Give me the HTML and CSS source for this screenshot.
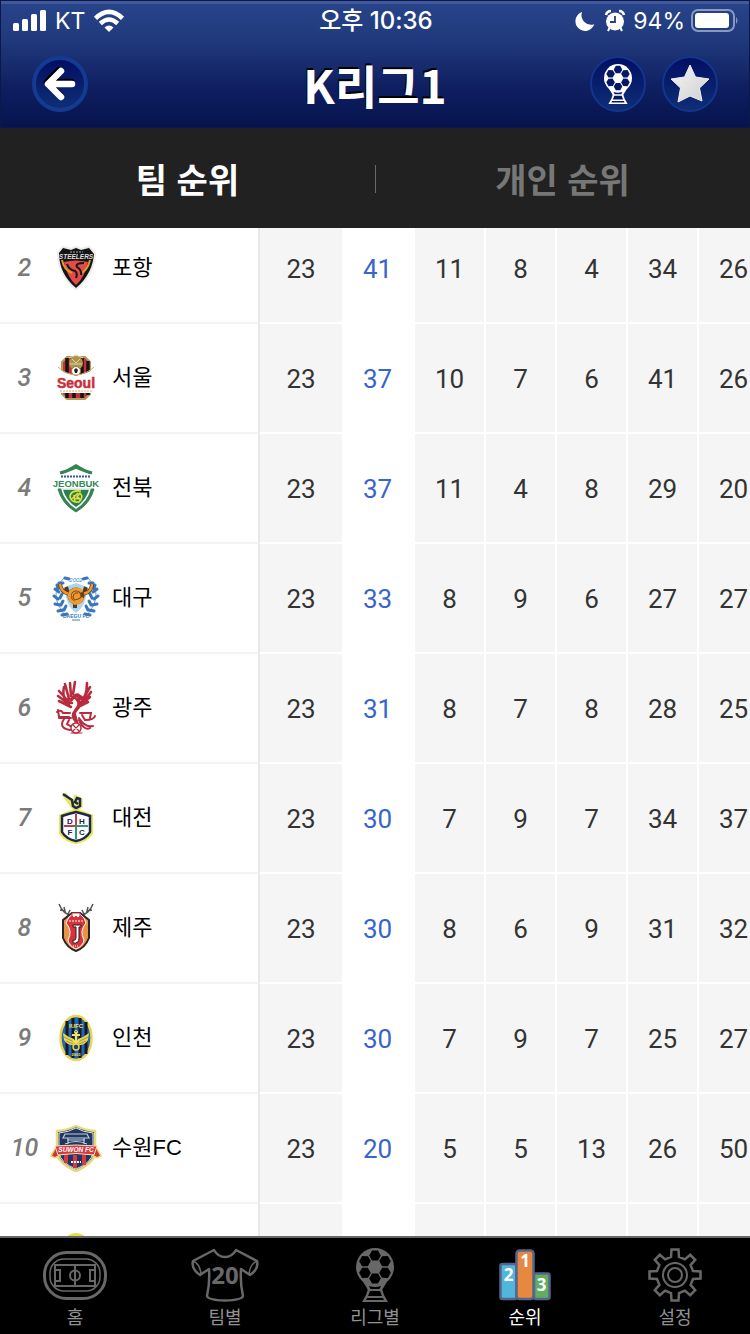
FILE: index.html
```html
<!DOCTYPE html>
<html lang="ko">
<head>
<meta charset="utf-8">
<meta name="viewport" content="width=device-width, initial-scale=1">
<title>K리그1 팀 순위</title>
<link rel="stylesheet" href="styles.css">
</head>
<body>
<svg class="defs" aria-hidden="true">
  <defs>
    <symbol id="ball-trophy" viewBox="0 0 38 54">
      <path d="M1 24 12 42H26L37 24Z" fill="currentColor"/>
      <path class="hole" d="M13 38 15 42H23L25 38Q19 40 13 38Z"/>
      <path d="M12 41H26L28 47 32 54H6L10 47Z" fill="currentColor"/>
      <path class="hole" d="M14 43H24L26 48H12Z M11 50H27L28 52H10Z"/>
      <circle cx="19" cy="19" r="19" fill="currentColor"/>
      <g class="hole">
        <path id="hex" d="M13.2 7.5 16 2.4H22L24.8 7.5 22 12.4H16Z"/>
        <use href="#hex" transform="rotate(60 19 19)"/>
        <use href="#hex" transform="rotate(120 19 19)"/>
        <use href="#hex" transform="rotate(180 19 19)"/>
        <use href="#hex" transform="rotate(240 19 19)"/>
        <use href="#hex" transform="rotate(300 19 19)"/>
      </g>
    </symbol>
    <linearGradient id="star-fill" x1="0" y1="0" x2="1" y2="1">
      <stop offset="0" stop-color="#f6f6f6"/><stop offset="1" stop-color="#cfcfcf"/>
    </linearGradient>
  </defs>
</svg>
<div class="app">
  <header class="header">
    <div class="status">
      <div class="status-left">
        <svg width="33" height="22" viewBox="0 0 33 22" fill="#fff"><rect y="13" width="6" height="8" rx="1.5"/><rect x="9" y="9" width="6" height="12" rx="1.5"/><rect x="18" y="4" width="6" height="17" rx="1.5"/><rect x="27" width="6" height="21" rx="1.5"/></svg>
        <span>KT</span>
        <svg width="30" height="22" viewBox="0 0 30 22" fill="none" stroke="#fff" stroke-width="4.5"><path d="M1.500 8.300Q15-4.500 28.500 8.300"/><path d="M6.300 13.500Q15 5.500 23.700 13.500"/><path d="M15 22 10.500 17.500Q15 13.500 19.500 17.500Z" fill="#fff" stroke="none"/></svg>
      </div>
      <time class="clock">오후 10:36</time>
      <div class="status-right">
        <svg width="20" height="20" viewBox="0 0 20 20"><path d="M7 1A9.700 9.700 0 1 0 19.300 13.200 9.700 9.700 0 0 1 7 1Z" fill="#fff"/></svg>
        <svg class="alarm" width="20" height="22" viewBox="0 0 20 22"><path d="M3 21 5 17M17 21 15 17" stroke="#fff" stroke-width="2"/><circle cx="10" cy="11.500" r="9" fill="#fff"/><path d="M1 5Q2 1 6 1M19 5Q18 1 14 1" fill="none" stroke="#fff" stroke-width="2.500"/><path d="M10 6V12H5" fill="none" stroke="#263f83" stroke-width="1.800"/></svg>
        <span>94%</span>
        <svg width="48" height="24" viewBox="0 0 48 24"><rect x="1" y="1" width="42" height="21" rx="6" fill="none" stroke="#8b99c0" stroke-width="2"/><rect x="4" y="4" width="34" height="15" rx="3" fill="#fff"/><path d="M45 8Q48 11.500 45 15Z" fill="#8b99c0"/></svg>
      </div>
    </div>
    <div class="nav">
      <button class="round back" aria-label="뒤로"><svg width="34" height="34" viewBox="0 0 34 34" fill="none" stroke-width="6.5" stroke-linecap="round" stroke-linejoin="round"><path d="M17 2 4 15 17 28M5 15H28" stroke="#000"/><path d="M18 4 5 17 18 30M6 17H29" stroke="#fff"/></svg></button>
      <h1 class="title">K리그1</h1>
      <div class="actions">
        <button class="round" aria-label="리그"><svg width="28" height="40"><use href="#ball-trophy"/></svg></button>
        <button class="round" aria-label="즐겨찾기"><svg width="40" height="40" viewBox="0 0 40 40"><path d="M20 1 25.500 13 39 15 29.500 24 32 37 20 32 8 38 10.500 24 1 15 14.500 13Z" fill="url(#star-fill)" stroke="#eee" stroke-linejoin="round"/></svg></button>
      </div>
    </div>
  </header>

  <div class="tabs" role="tablist">
    <button class="tab is-active" role="tab" aria-selected="true">팀 순위</button>
    <button class="tab" role="tab" aria-selected="false">개인 순위</button>
  </div>

  <main class="standings">
    <table class="table">
      <colgroup><col class="col-team"><col class="col-played"><col class="col-points"><col class="col-stat"><col class="col-stat"><col class="col-stat"><col class="col-stat"><col class="col-stat"></colgroup>
      <tbody>
        <tr><th scope="row"><div class="team"><span class="rank">2</span>
          <svg class="badge" viewBox="-27 -28 54 56"><path d="M-17-15-13-20-5-18 0-20 5-18 13-20 18-14C17-2 12 10 0 20-12 10-17-2-17-15Z" fill="#111" stroke="#ececec" stroke-width="4"/><path d="M-17-15-13-20-5-18 0-20 5-18 13-20 18-14C17-2 12 10 0 20-12 10-17-2-17-15Z" fill="#151515"/><path d="M-12-6Q0-9 12-6 9 9 0 17-9 9-12-6Z" fill="#e24b47"/><path d="M-14-8Q-12 2-4 5M14-8Q12 1 6 5" stroke="#d99a2b" stroke-width="2" fill="none"/><path d="M-9-4Q-7 2-1 3 2 5 0 10M8-5Q-1-5 1-1 6 2 5 7" stroke="#171717" stroke-width="2" fill="none"/><text y="-9" font-size="6.500" font-weight="700" fill="#ddd" text-anchor="middle" font-style="italic">STEELERS</text><path d="M-6-16H7" stroke="#aaa" stroke-dasharray="2 1"/></svg><span class="name">포항</span></div></th><td>23</td><td class="pts">41</td><td>11</td><td>8</td><td>4</td><td>34</td><td>26</td></tr>
        <tr><th scope="row"><div class="team"><span class="rank">3</span>
          <svg class="badge" viewBox="-27 -28 54 56"><path d="M-9-21H9L14-16V16L9 21H-9L-14 16V-16Z" fill="#c5303a" stroke="#b39a5b" stroke-width="2"/><path d="M-9-20V20M-2-20V20M6-20V20M12-17V17" stroke="#171313" stroke-width="3.500"/><path d="M-18-10Q-12-4 0-3 12-4 18-10L20 15H-20Z" fill="#fff"/><circle cy="-15" r="7" fill="#ad9350"/><path d="M-7-20 0-23 7-20M-6-14H6M-4-19 0-15 4-19" stroke="#e5d39b" fill="none"/><circle cy="-7" r="4.500" fill="#fff" stroke="#8d7a42"/><path d="M-2-8 0-10 2-8 1-5H-1Z" fill="#222"/><path d="M-18-11Q-11-4 0-3 11-4 18-11" stroke="#c8b273" fill="none"/><text y="10" font-size="14" font-weight="700" fill="#c82f3c" stroke="#c82f3c" stroke-width=".5" text-anchor="middle">Seoul</text><path d="M-16 13H17" stroke="#c8b273" stroke-dasharray="2 1"/></svg><span class="name">서울</span></div></th><td>23</td><td class="pts">37</td><td>10</td><td>7</td><td>6</td><td>41</td><td>26</td></tr>
        <tr><th scope="row"><div class="team"><span class="rank">4</span>
          <svg class="badge" viewBox="-27 -28 54 56"><path d="M-16-15-7-20 0-24 7-20 16-15 14-14Q7-17 0-20-7-17-14-14Z" fill="#368453"/><path d="M-16-15Q-5-18 0-21 5-18 16-15" fill="none" stroke="#368453" stroke-width="3"/><path d="M-18 1H18Q14 16 0 24-14 16-18 1Z" fill="#368453" stroke="#368453"/><path d="M-14 1H14Q11 13 0 20-11 13-14 1Z" fill="#29814f" stroke="#fff" stroke-width="1.500"/><path d="M-15-11.500H15" stroke="#315895" stroke-width="2" stroke-dasharray="2 1"/><text y="-1" font-size="9.500" font-weight="700" fill="#348858" stroke="#fff" stroke-width="2" paint-order="stroke" text-anchor="middle">JEONBUK</text><path d="M5 3Q-6 2-6 9-4 15 3 14 8 9 4 5L1 9 4 11-3 10 2 5M-2 7-1 14" stroke="#e5df3f" stroke-width="1.600" fill="none"/></svg><span class="name">전북</span></div></th><td>23</td><td class="pts">37</td><td>11</td><td>4</td><td>8</td><td>29</td><td>20</td></tr>
        <tr><th scope="row"><div class="team"><span class="rank">5</span>
          <svg class="badge" viewBox="-27 -28 54 56"><path d="M-11-11 0-15 11-11Q11 7 0 15-11 7-11-11Z" fill="#a9d7f3"/><g fill="none" stroke="#3976bd"><path d="M-12-20Q-29-3-10 18M12-20Q29-3 10 18" stroke-width=".7"/><path d="M-11-20-7-19M11-20 7-19M-17-15-13-15M17-15 13-15M-21-9-17-6M21-9 17-6M-22-2-18 1M22-2 18 1M-21 6-16 7M21 6 16 7M-18 13-13 12M18 13 13 12M-14 17-9 16M14 17 9 16M-18-9-19-13M18-9 19-13M-16 0-14-4M16 0 14-4M-15 7-13 3M15 7 13 3M-12 12-10 8M12 12 10 8" stroke-width="3" stroke-linecap="round"/></g><path d="M-16-14Q-15-6-7-4M16-14Q16-6 7-4M-10-11-8-5M10-11 8-5M-1 4V10" fill="none" stroke="#5b3920" stroke-width="4"/><path d="M-16-14Q-15-6-7-4M16-14Q16-6 7-4M-1 4V7" fill="none" stroke="#ed982c" stroke-width="2.500"/><circle cy="-2" r="6.500" fill="#ed982c" stroke="#694020" stroke-width="4"/><path d="M6-6A7 7 0 1 0 7 0Q2 5-1 1-4-5 2-5" fill="none" stroke="#f09b30" stroke-width="3"/><path d="M4 0Q-2 4-3-1-2-6 2-5" fill="none" stroke="#694020"/><text y="-16" font-size="6" font-style="italic" fill="#488ac4" text-anchor="middle">2002</text><text y="20" font-size="5" font-weight="700" fill="#2f79b9" text-anchor="middle">DAEGU FC</text><path d="M-4 22H4" stroke="#3c80bd"/></svg><span class="name">대구</span></div></th><td>23</td><td class="pts">33</td><td>8</td><td>9</td><td>6</td><td>27</td><td>27</td></tr>
        <tr><th scope="row"><div class="team"><span class="rank">6</span>
          <svg class="badge" viewBox="-27 -28 54 56"><g fill="none" stroke="#b92b3e" stroke-linecap="round"><path d="M-4-5Q-15-7-12-21M-7-9-11-24M-5-12-6-25M-3-14-1-26M-7-6-17-17M-7-4-18-12M-5-1-17-7" stroke-width="2.600"/><path d="M3-4Q11-10 11-25M7-9 14-21M8-7 15-16M6-4 14-11M4-2 12-6" stroke-width="2.600"/><path d="M-5-8Q0-15 3-12L6-10 1-9Q6-4 0 2-5 8 0 13" stroke-width="3.500"/><path d="M-18 2-17 9H-7M-19 4Q-15 1-13 5H-6M-17 10H-5M-12 11Q-18 20-6 22M-7 12-9 16-4 19M4 5H15L14 10M6 7 9 12Q18 12 19 8M3 10Q9 20 17 18M3 12Q8 23 14 20M-1 6 2 17" stroke-width="2"/><circle cy="20" r="5" fill="#fff" stroke-width="1.500" stroke-dasharray="3 1"/><path d="M-3 17 3 23M3 17-3 23M-5 25H6" stroke-width="1.200"/></g></svg><span class="name">광주</span></div></th><td>23</td><td class="pts">31</td><td>8</td><td>7</td><td>8</td><td>28</td><td>25</td></tr>
        <tr><th scope="row"><div class="team"><span class="rank">7</span>
          <svg class="badge" viewBox="-27 -28 54 56"><path d="M-12-24-3-12 0-9 4-12V-18L0-20-1-13M0-9V-6" fill="none" stroke="#e9e755" stroke-width="5"/><path d="M-13-24-4-18-3-12 0-10 4-12V-19L1-20-1-16 2-14" fill="none" stroke="#1b2850" stroke-width="2.500"/><path d="M0-9V-5" stroke="#1b2850" stroke-width="3"/><path d="M0-7Q8-5 15-2V15Q10 22 0 24-10 22-15 15V-2Q-8-5 0-7Z" fill="#fff" stroke="#ece952" stroke-width="4"/><path d="M0-6Q8-4 14-2V14Q10 21 0 23-10 21-14 14V-2Q-8-4 0-6Z" fill="#fff" stroke="#1b2850" stroke-width="2.500"/><path d="M0-4V8H-12" fill="none" stroke="#bd3d52" stroke-width="2"/><path d="M12 8H0V21" fill="none" stroke="#319474" stroke-width="2"/><g fill="#1b2850" font-size="8" font-weight="700" text-anchor="middle"><text x="-6" y="6">D</text><text x="6" y="6">H</text><text x="-6" y="17">F</text><text x="6" y="17">C</text></g></svg><span class="name">대전</span></div></th><td>23</td><td class="pts">30</td><td>7</td><td>9</td><td>7</td><td>34</td><td>37</td></tr>
        <tr><th scope="row"><div class="team"><span class="rank">8</span>
          <svg class="badge" viewBox="-27 -28 54 56"><g fill="none" stroke="#555" stroke-width="1.500"><path d="M-4-12Q-13-14-17-24M-16-18-11-17-12-21M-8-14-6-18M4-12Q13-14 17-24M16-18 11-17 12-21M8-14 6-18"/></g><path d="M-8-12-4-15H4L8-12 13-8V10Q9 20 0 23-9 20-13 10V-8Z" fill="#e99345" stroke="#272329" stroke-width="2"/><path d="M-7-11-3-14H4L8-10 10-5Q3 3 8 12 7 18 0 21-7 18-8 12-3 3-10-5Z" fill="#d9323c" stroke="#fff"/><path d="M-4-12V-15H4V-12L2-10 0-12-2-10Z" fill="#fff" stroke="#d9323c"/><path d="M-7-7H8" stroke="#fff" stroke-dasharray="2 1"/><path d="M-3-3H5V-1H3V10Q3 16-3 15V12Q0 13 0 9V-1H-3Z" fill="#fff" stroke="#271a1d"/><path d="M-3 18H3" stroke="#fff" stroke-dasharray="1 1"/></svg><span class="name">제주</span></div></th><td>23</td><td class="pts">30</td><td>8</td><td>6</td><td>9</td><td>31</td><td>32</td></tr>
        <tr><th scope="row"><div class="team"><span class="rank">9</span>
          <svg class="badge" viewBox="-27 -28 54 56"><ellipse rx="15.500" ry="22" fill="#2465b6" stroke="#ead54d" stroke-width="2.500"/><path d="M-9-17V17M-3-20V20M4-20V20M10-16V16" stroke="#16191f" stroke-width="3"/><path d="M-13-5Q-8-1-2 1L-1 7Q-9 8-12 2L-13-5ZM13-5Q8-1 2 1L1 7Q9 8 12 2Z" fill="#e9d550"/><path d="M-12-1-2 4M-10 3-3 6M12-1 2 4M10 3 3 6" stroke="#8f8a3d" stroke-width=".8"/><path d="M0-6V4M-4-3H4M-3 2 0 5 3 2" stroke="#f5e35c" stroke-width="2" fill="none"/><circle cy="9" r="3" fill="#194779" stroke="#e9d550" stroke-width="1.500"/><circle cy="-6" r="1.500" fill="none" stroke="#f5e35c"/><g fill="#f5e35c" text-anchor="middle" font-weight="700"><text y="-10" font-size="6">IUFC</text><text y="18" font-size="4">2003</text></g></svg><span class="name">인천</span></div></th><td>23</td><td class="pts">30</td><td>7</td><td>9</td><td>7</td><td>25</td><td>27</td></tr>
        <tr><th scope="row"><div class="team"><span class="rank">10</span>
          <svg class="badge" viewBox="-27 -28 54 56"><path d="M-19-17Q-8-18 0-22 8-18 19-17V5Q17 16 0 23-17 16-19 5Z" fill="#24365f" stroke="#e5dc77" stroke-width="2.500"/><path d="M-17-15Q-7-16 0-20 7-16 17-15V5Q15 15 0 21-15 15-17 5Z" fill="#24365f" stroke="#dfe4ea"/><path d="M-11-14H11L13-10H-13ZM-9-8H9M-11-4Q0-9 11-4M-8-10V-4M8-10V-4" fill="none" stroke="#b9cddd" stroke-width="1.200"/><path d="M-10 6V15M-1 7V20M8 7V17" stroke="#d63844" stroke-width="4"/><path d="M-20-1-25 8-21 10-16 7M20-1 25 8 21 10 16 7" fill="#cf3442" stroke="#e8d968" stroke-width="1.500"/><path d="M-21-2Q0-4 21-2L18 7Q0 4-18 7Z" fill="#d93846" stroke="#f4e8b0"/><text y="4" font-size="6.500" font-weight="700" font-style="italic" fill="#fff" text-anchor="middle">SUWON FC</text><path d="M-5 14H5" stroke="#fff" stroke-width="2" stroke-dasharray="2 1"/></svg><span class="name">수원FC</span></div></th><td>23</td><td class="pts">20</td><td>5</td><td>5</td><td>13</td><td>26</td><td>50</td></tr>
        <tr><th scope="row"><div class="team"><span class="rank"></span>
          <svg class="badge" viewBox="-27 -28 54 56"><ellipse rx="18" ry="25" fill="#e8df3c"/></svg></div></th><td></td><td class="pts"></td><td></td><td></td><td></td><td></td><td></td></tr>
      </tbody>
    </table>
  </main>

  <nav class="tabbar">
    <a class="item" href="#home"><svg width="64" height="54" viewBox="0 0 64 54" fill="none" stroke="currentColor"><rect x="1.500" y="4.500" width="61" height="46" rx="22" stroke-width="3"/><rect x="7" y="11" width="50" height="32" rx="14" stroke-width="1.500"/><path d="M12 17H52V38H12ZM32 17V38M12 22H17V33H12M52 22H47V33H52" stroke-width="2"/><circle cx="32" cy="27.500" r="5" stroke-width="2"/></svg><span>홈</span></a>
    <a class="item" href="#teams"><svg width="68" height="54" viewBox="0 0 68 54" fill="none" stroke="currentColor" stroke-width="2.500" stroke-linejoin="round"><path d="M23 2 2 13Q0 21 9 27L18 21Q19 35 16 48 17 52 34 52.500 51 52 52 48 49 35 50 21L59 27Q68 21 66 13L45 2Q41 9 34 9 27 9 23 2Z"/><path d="M2 13Q9 16 10 26M66 13Q59 16 58 26" stroke-width="1.500"/><text x="34" y="36" text-anchor="middle" font-size="24" font-weight="700" fill="currentColor" stroke="none" class="numeral">20</text></svg><span>팀별</span></a>
    <a class="item" href="#leagues"><svg width="38" height="54"><use href="#ball-trophy"/></svg><span>리그별</span></a>
    <a class="item is-active" href="#ranking" aria-current="page"><svg width="52" height="54" viewBox="0 0 52 54"><g stroke="#55658c" stroke-width="2.500"><rect x="1.500" y="16" width="16" height="35" rx="2" fill="#52b5dc"/><rect x="35" y="25.500" width="15.500" height="25.500" rx="2" fill="#61ad61"/><rect x="17.500" y="2.500" width="17" height="48.500" rx="3" fill="#e68840"/></g><g fill="#fff" font-size="17" font-weight="700" text-anchor="middle" class="numeral"><text x="9.500" y="33">2</text><text x="26" y="19">1</text><text x="42.500" y="43">3</text></g></svg><span>순위</span></a>
    <a class="item" href="#settings"><svg width="54" height="54" viewBox="-27 -27 54 54" fill="none" stroke="currentColor" stroke-width="2.500"><path d="M-4-18-3.500-25.500H3.500L4-18 9.900-15.600 15.200-20.200 20.200-15.200 15.600-9.900 18-4 25.500-3.500V3.500L18 4 15.600 9.900 20.200 15.200 15.200 20.200 9.900 15.600 4 18 3.500 25.500H-3.500L-4 18-9.900 15.600-15.200 20.200-20.200 15.200-15.600 9.900-18 4-25.500 3.500V-3.500L-18-4-15.600-9.900-20.200-15.200-15.200-20.200-9.900-15.600Z"/><circle r="12" stroke-width="2"/><circle r="7" stroke-width="2"/></svg><span>설정</span></a>
  </nav>
</div>
</body>
</html>
```
FILE: styles.css
```css
* { box-sizing: border-box; }
body { margin: 0; font-family: Roboto, "Noto Sans CJK KR", sans-serif; background: #fff; }
button { padding: 0; border: 0; background: none; color: inherit; font: inherit; cursor: pointer; }
svg { display: block; flex: none; }
.defs { position: absolute; width: 0; height: 0; }
.hole { fill: var(--hole, #061765); }

.app { display: flex; flex-direction: column; height: 100vh; }

.header {
  flex: none;
  color: #fff;
  background: linear-gradient(#28448b, #203a7c 30%, #0e1e60 70%, #06134d);
  border: 1px solid #0c1847;
  box-shadow: inset 0 3px #41589a;
}
.status {
  display: grid;
  grid-template-columns: 1fr auto 1fr;
  align-items: center;
  height: 40px;
  padding: 0 10px 0 12px;
  font: 23px/28px Inter, "Noto Sans CJK KR", sans-serif;
}
.status svg { overflow: visible; }
.status-left, .status-right { display: flex; align-items: center; gap: 9px; }
.status-right { justify-content: flex-end; gap: 6px; }
.alarm { margin: 0 2px 0 4px; }
.clock { font-size: 24px; font-weight: 500; }

.nav {
  display: grid;
  grid-template-columns: 1fr auto 1fr;
  align-items: center;
  height: 86px;
  padding: 0 31px;
}
.title {
  margin: 0;
  font: 700 46px/60px "Noto Sans CJK KR", sans-serif;
  text-shadow: -1px -2px #000;
}
.actions { display: flex; justify-content: flex-end; gap: 16px; }
.round {
  display: grid;
  place-items: center;
  width: 56px;
  height: 56px;
  border: 2px solid #12368d;
  border-radius: 50%;
  background: linear-gradient(#020f63, #0f2e76);
}
.back { border-width: 4px; border-color: #153a92; }

.tabs { flex: none; display: flex; height: 100px; background: #212121; }
.tab {
  flex: 1;
  display: flex;
  align-items: center;
  justify-content: center;
  padding-top: 2px;
  color: #777;
  font: 700 34px/48px "Noto Sans CJK KR", sans-serif;
}
.tab.is-active { color: #fff; }
.tab + .tab::before { content: ""; width: 1px; height: 28px; margin-right: auto; background: #6a6a6a; }
.tab + .tab::after { content: ""; width: 1px; margin-left: auto; }

.standings { flex: 1; min-height: 0; overflow: auto; scrollbar-width: none; }
.table { width: 100%; min-width: 770px; margin-top: -14px; table-layout: fixed; border-spacing: 0; }
.col-team { width: 260px; }
.col-played { width: 82px; }
.col-points { width: 73px; }
.table th, .table td { height: 110px; padding: 0; font-weight: 400; }
.table th { border-right: 2px solid #e8e8e8; border-bottom: 2px solid #f3f3f3; color: #000; }
.table td {
  padding-top: 2px;
  border-right: 2px solid #fff;
  border-bottom: 2px solid #fff;
  background: #f5f5f5;
  color: #333;
  font-size: 26px;
  line-height: 32px;
  text-align: center;
}
.table td:nth-child(2) { border-right: 0; }
.table .pts { background: #fff; color: #3765cb; }
.team { display: flex; align-items: center; }
.name { font: 22px/32px "Liberation Sans", "Noto Sans CJK KR", sans-serif; }
.rank {
  width: 49px;
  color: #7b7b7b;
  font: italic 500 25px/32px Roboto, sans-serif;
  text-align: center;
}
.badge { width: 54px; height: 56px; margin-right: 9px; font-family: "Liberation Sans", sans-serif; }
.numeral { font-family: "Open Sans", sans-serif; }

.tabbar { --hole: #000; flex: none; display: flex; height: 98px; border-top: 2px solid #666; background: #000; }
.item {
  flex: 1;
  display: flex;
  flex-direction: column;
  align-items: center;
  gap: 1px;
  padding-top: 10px;
  color: #686868;
  text-decoration: none;
  font: 18px/26px "Noto Sans CJK KR", sans-serif;
}
.item span { color: #929292; }
.item.is-active span { color: #fff; }
```
